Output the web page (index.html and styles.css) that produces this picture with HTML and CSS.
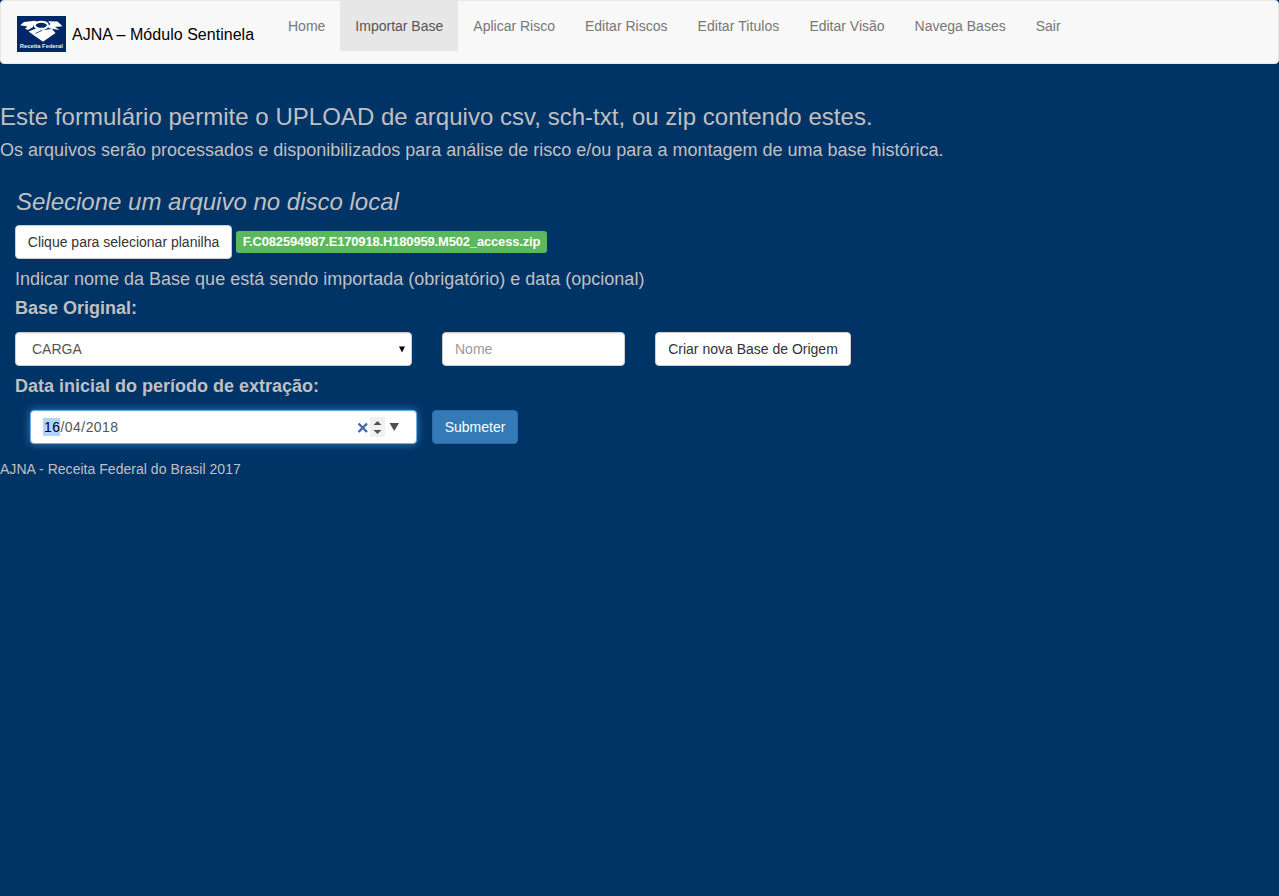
FILE: index.html
```html
<!DOCTYPE html>
<html lang="pt-BR">
<head>
<meta charset="utf-8">
<title>AJNA – Módulo Sentinela</title>
<link rel="stylesheet" href="styles.css">
</head>
<body>
<nav class="navbar">
  <a class="brand">
    <svg class="logo" width="49" height="36" viewBox="0 0 49 36">
      <rect width="49" height="36" fill="#002868"/>
      <path d="M3.2 9.2 7 6 18 4.8 21 6.3 17 8.8 15.8 11.2 11 14 8 12.8 10.5 10.6Z" fill="#fff"/>
      <path d="M11.5 15.5 19 12.5 24 14.2 35 13 38.5 17 26 25.8Z" fill="#fff"/>
      <path d="M31 5.2 40.5 5.6 45.5 10.3 38 11 42.5 14 33 12.5 30.5 11 33.5 8Z" fill="#fff"/>
      <ellipse cx="24.3" cy="9.3" rx="6.6" ry="3.6" fill="none" stroke="#fff" stroke-width="2.1"/>
      <path d="M18.5 17.5 25 14.4" stroke="#002868" stroke-width=".8"/>
      <text x="2.8" y="31.6" textLength="43" class="logo-text">Receita Federal</text>
    </svg>
    <span class="brand-name">AJNA – Módulo Sentinela</span>
  </a>
  <div class="menu">
    <a>Home</a><a class="active">Importar Base</a><a>Aplicar Risco</a><a>Editar Riscos</a><a class="titles">Editar Titulos</a><a>Editar Visão</a><a>Navega Bases</a><a>Sair</a>
  </div>
</nav>
<main>
  <h3 class="intro">Este formulário permite o UPLOAD de arquivo csv, sch-txt, ou zip contendo estes.</h3>
  <h4>Os arquivos serão processados e disponibilizados para análise de risco e/ou para a montagem de uma base histórica.</h4>
  <form class="form">
    <h3 class="select-title">Selecione um arquivo no disco local</h3>
    <div class="row file-row">
      <span class="btn file-btn">Clique para selecionar planilha</span>
      <span class="file-label">F.C082594987.E170918.H180959.M502_access.zip</span>
    </div>
    <h4 class="hint">Indicar nome da Base que está sendo importada (obrigatório) e data (opcional)</h4>
    <h4 class="label">Base Original:</h4>
    <div class="row base-row">
      <div class="control select"><span>CARGA</span>
        <svg width="6" height="7" viewBox="0 0 6 7"><path d="M0 .5h6L3 6.5Z" fill="#000"/></svg>
      </div>
      <div class="control name">Nome</div>
      <span class="btn create-btn">Criar nova Base de Origem</span>
    </div>
    <h4 class="label">Data inicial do período de extração:</h4>
    <div class="row date-row">
      <div class="control date"><span class="date-text"><span class="selected">16</span>/04/2018</span>
        <svg width="42" height="20" viewBox="0 0 42 20">
          <path d="M1.5 6.5 10 15M10 6.5 1.5 15" stroke="#3f68b0" stroke-width="2.4"/>
          <rect x="13" width="15" height="20" fill="#f0f0f0"/>
          <path d="M16.5 8h8l-4-4ZM16.5 13h8l-4 4Z" fill="#505050"/>
          <path d="M32.5 6h9.5l-4.75 8Z" fill="#505050"/>
        </svg>
      </div>
      <span class="btn submit">Submeter</span>
    </div>
  </form>
  <p class="footer">AJNA - Receita Federal do Brasil 2017</p>
</main>
</body>
</html>
```

FILE: styles.css
```css
* { box-sizing: border-box; }
body {
  margin: 0;
  background: #003366;
  color: #c0c0c0;
  font: 14px/20px "Liberation Sans", Arial, sans-serif;
}
h3, h4, p { margin: 0; font-weight: normal; white-space: nowrap; }
h3 { font-size: 24px; line-height: 26px; }
h4 { font-size: 18px; line-height: 20px; }
.navbar {
  display: flex;
  height: 64px;
  background: #f8f8f8;
  border: 1px solid #e7e7e7;
  border-radius: 4px;
}
.brand { display: flex; width: 272px; padding: 15px 0 0 16px; gap: 6px; }
.logo { flex: none; }
.logo-text { font: bold 5.8px "Liberation Sans", Arial, sans-serif; fill: #e8ecf4; }
.brand-name { color: #000; font-size: 16px; line-height: 37px; letter-spacing: .03px; white-space: nowrap; }
.menu { display: flex; height: 50px; }
.menu a { padding: 15px; color: #777; white-space: nowrap; }
.menu .active { background: #e7e7e7; color: #555; }
.menu .titles { letter-spacing: .07px; }
main { padding-top: 40px; }
main > h4 { margin-top: 10px; }
.intro { letter-spacing: .025px; }
.form { padding: 29px 15px 0; }
.select-title { padding-left: 1px; font-style: italic; }
.row { display: flex; height: 34px; }
.file-row { margin-top: 10px; align-items: center; gap: 4px; }
.btn {
  height: 34px;
  padding: 6px 0;
  border: 1px solid #ccc;
  border-radius: 4px;
  background: #fff;
  color: #333;
  text-align: center;
  white-space: nowrap;
}
.file-btn { width: 217px; }
.file-label {
  width: 311px;
  height: 22px;
  padding-top: 1px;
  border-radius: 3px;
  background: #5cb85c;
  color: #fff;
  font-size: 13px;
  font-weight: bold;
  letter-spacing: -.17px;
  text-align: center;
  white-space: nowrap;
}
.hint { margin-top: 10px; }
.label { margin-top: 9px; font-weight: bold; }
.base-row { margin-top: 14px; }
.control {
  display: flex;
  align-items: center;
  height: 34px;
  border: 1px solid #ccc;
  border-radius: 4px;
  background: #fff;
  color: #555;
  box-shadow: inset 0 1px 1px rgba(0, 0, 0, .075);
}
.select { width: 397px; padding: 0 6px 0 16px; justify-content: space-between; }
.name { width: 183px; margin-left: 30px; padding-left: 12px; color: #999; }
.create-btn { width: 196px; margin-left: 30px; }
.base-row + .label { margin-top: 10px; }
.date-row { margin-top: 14px; padding-left: 15px; gap: 15px; }
.date {
  width: 387px;
  padding: 0 17px 0 12px;
  justify-content: space-between;
  border-color: #66afe9;
  box-shadow: inset 0 1px 1px rgba(0, 0, 0, .075), 0 0 8px rgba(102, 175, 233, .6);
}
.date-text { letter-spacing: .45px; }
.selected { padding: 1px 0 1px 1px; background: #b3d3ff; color: #000; }
.submit { width: 86px; background: #337ab7; border-color: #2e6da4; color: #fff; }
.footer { margin-top: 15px; letter-spacing: .03px; }
```
